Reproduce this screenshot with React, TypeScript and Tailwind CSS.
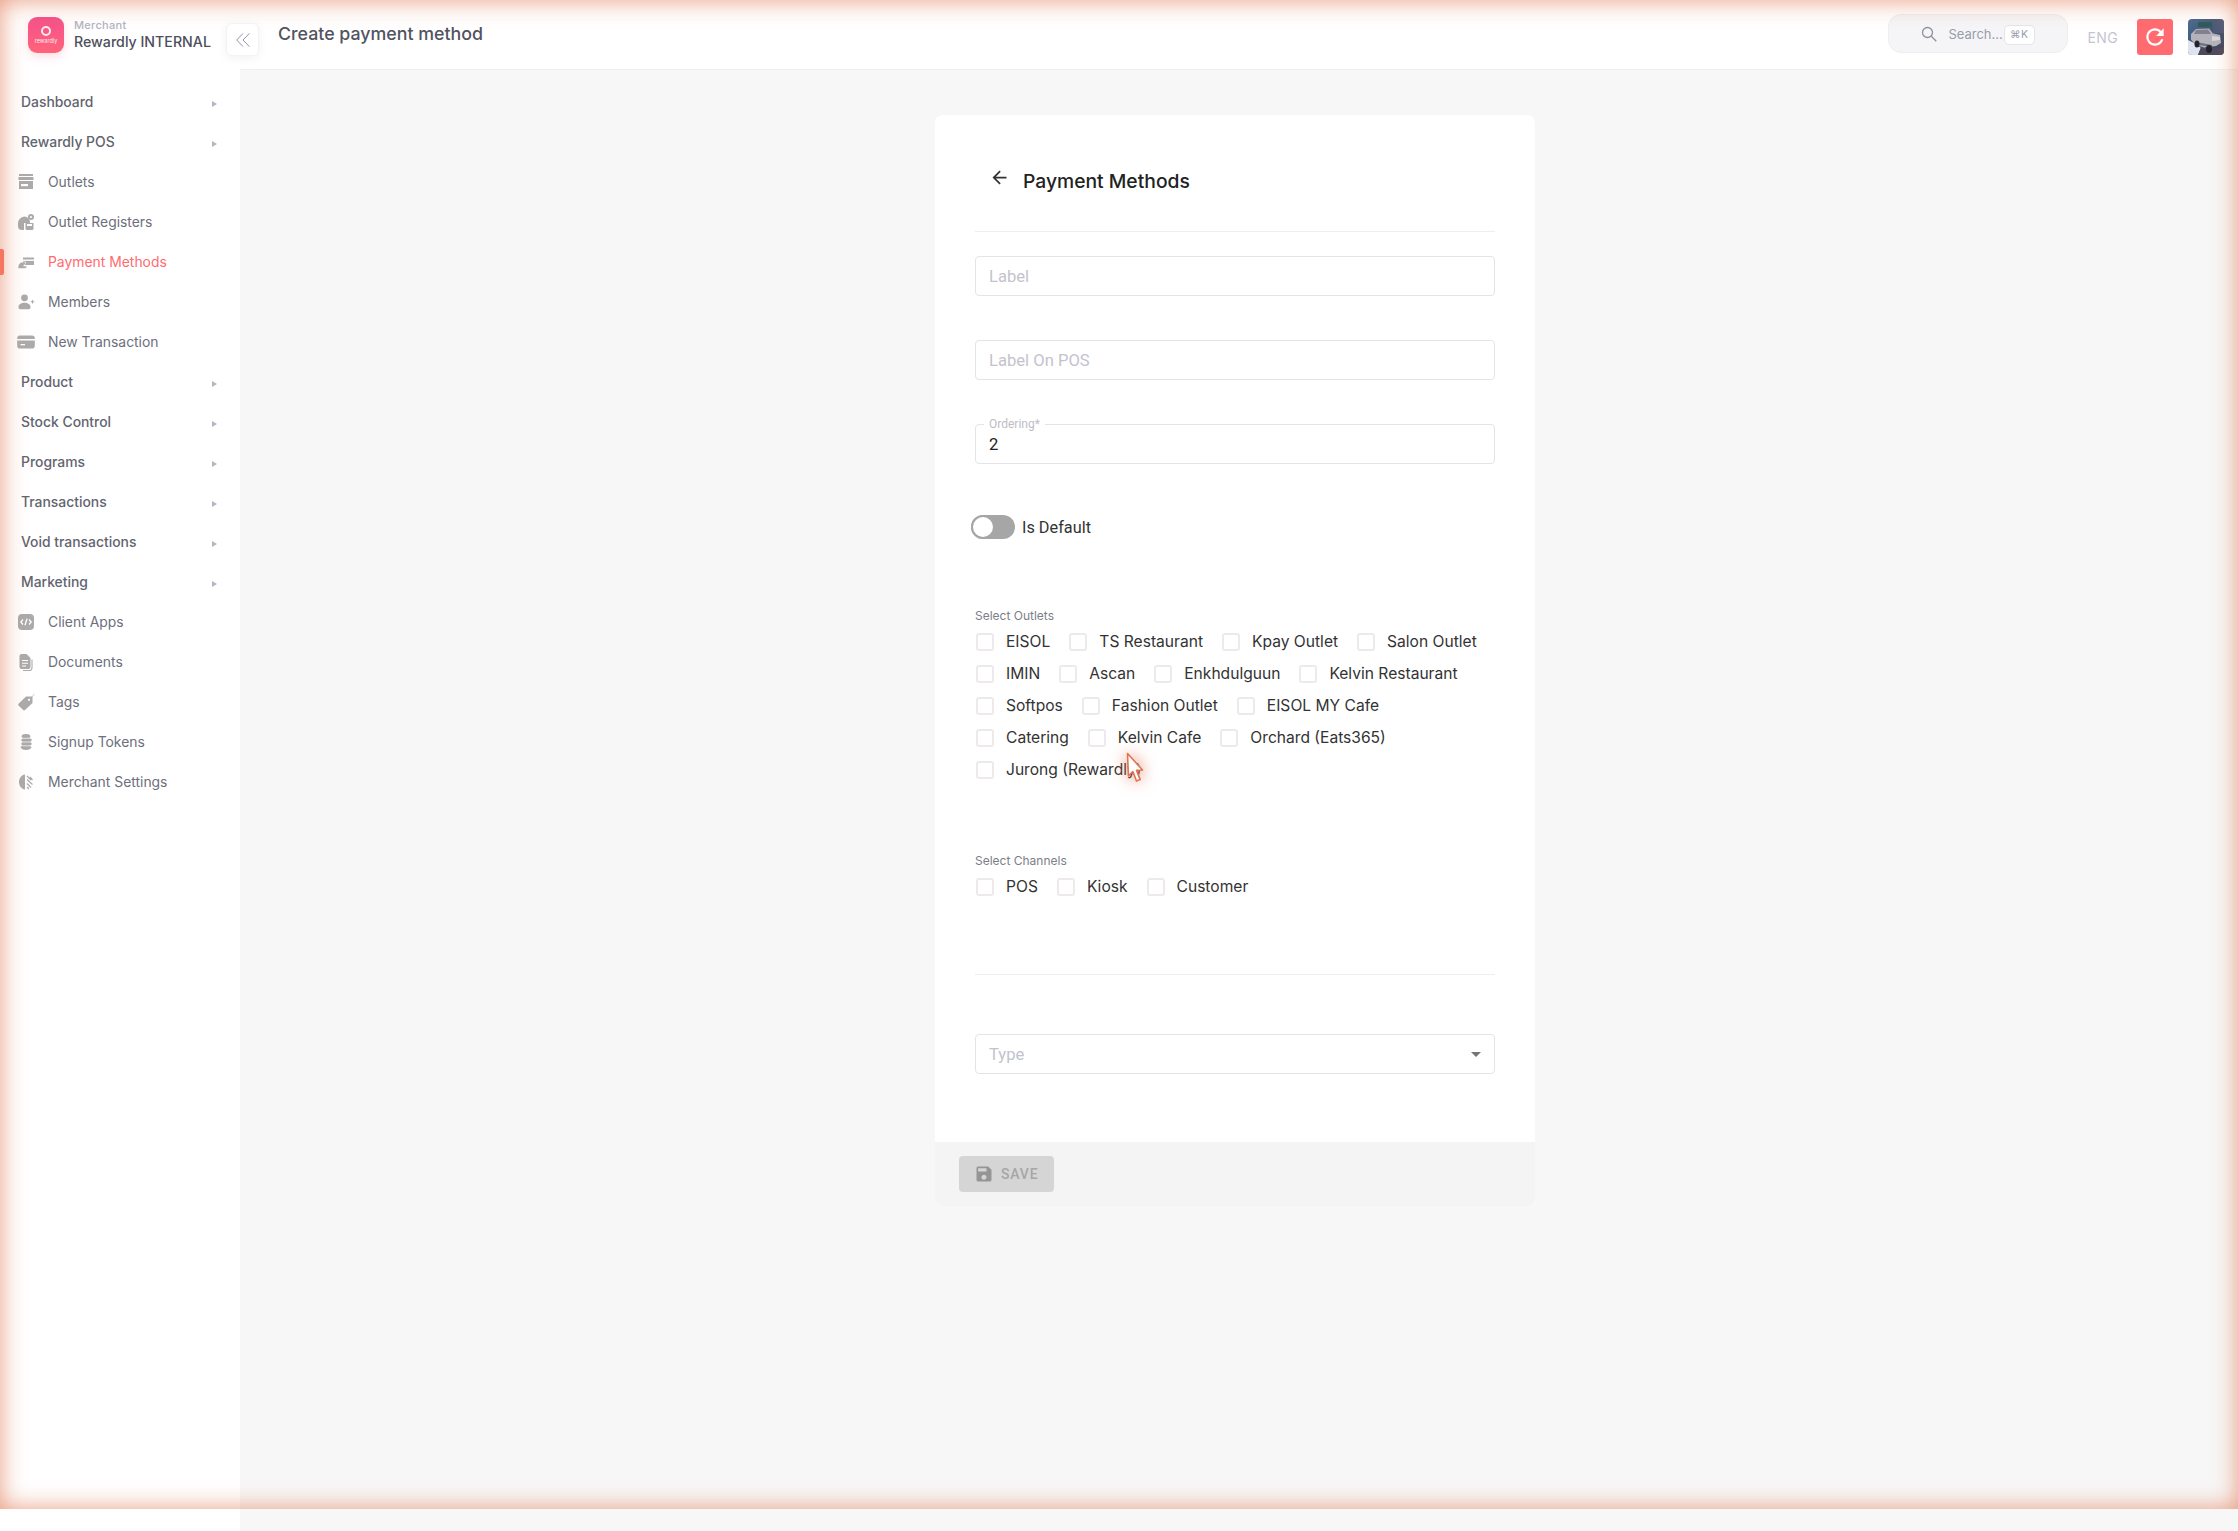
import React from "react";

const I = ({ children }: { children: React.ReactNode }) => (
  <svg viewBox="0 0 18 18" className="w-[18px] h-[18px] text-[#ababab]" fill="currentColor">{children}</svg>
);

const icons: Record<string, React.ReactNode> = {
  outlets: (
    <I>
      <path d="M2 1h14v2H2z" />
      <path d="M1.500 4h15v3h-15z" />
      <path d="M2 8h14v8H2z" />
      <path d="M4 11h7v2.200H4z" fill="#fff" />
    </I>
  ),
  registers: (
    <I>
      <path d="M8 3.500a7 7 0 0 0-7 7v2.500a4 4 0 0 0 4 4h2v-7h6a6 6 0 0 0-5-6.500z" />
      <path d="M8.500 10h8v5.500a1.500 1.500 0 0 1-1.500 1.500h-5a1.500 1.500 0 0 1-1.500-1.500z" />
      <path d="M10 11h5v2h-5z" fill="#fff" />
      <circle cx="14" cy="4" r="3" />
      <circle cx="14" cy="4" r="1" fill="#fff" />
    </I>
  ),
  payment: (
    <I>
      <path d="M6 4.500h11v7.500H6z" />
      <path d="M6 6.500h11v1.400H6z" fill="#fff" />
      <path d="M1 14.500c0-2.500 1.500-5 4-5.500h3.500v1.500l-2 2.500H10l-1 2.500H1.500z" stroke="#fff" strokeWidth=".6" />
    </I>
  ),
  members: (
    <I>
      <circle cx="7.500" cy="4.800" r="3.400" />
      <path d="M1.500 14c0-2.500 2.500-4.200 6-4.200s6 1.700 6 4.200v.6a1.600 1.600 0 0 1-1.600 1.600h-8.800a1.600 1.600 0 0 1-1.600-1.600z" />
      <path d="M15 7h1v1.300h1.300v1H16v1.300h-1V9.300h-1.300v-1H15z" />
    </I>
  ),
  card: (
    <I>
      <path d="M3 2.500h12a2.800 2.800 0 0 1 2.800 2.800V6H.2v-.7A2.800 2.800 0 0 1 3 2.500z" />
      <path d="M.2 7.400h17.600v5.300a2.800 2.800 0 0 1-2.800 2.800H3a2.800 2.800 0 0 1-2.800-2.800z" />
      <path d="M3.500 11h4.500v1.300H3.500z" fill="#fff" />
    </I>
  ),
  apps: (
    <I>
      <rect x="1" y="1" width="16" height="16" rx="4" />
      <path d="M6 6.500 3.800 9 6 11.500M12 6.500 14.200 9 12 11.500M10 5.800 8 12.200" stroke="#fff" strokeWidth="1.300" fill="none" />
    </I>
  ),
  docs: (
    <I>
      <path d="M2.500 3a2 2 0 0 1 2-2h5l4 4v9a2 2 0 0 1-2 2h-7a2 2 0 0 1-2-2z" />
      <path d="M5 7h6v1.100H5zM5 9.700h6v1.100H5zM5 12.400h4v1.100H5z" fill="#fff" />
      <path d="M15 6.500v8.500a2.500 2.500 0 0 1-2.500 2.500H6" fill="none" stroke="currentColor" strokeWidth="1.100" />
    </I>
  ),
  tags: (
    <I>
      <path d="M9 3.500h6.500v6.500L8 17a1.300 1.300 0 0 1-1.800 0L1.500 12.500a1.300 1.300 0 0 1 0-1.800z" />
      <circle cx="12" cy="6.800" r="1.100" fill="#fff" />
      <path d="M14 5 17.500 1" stroke="currentColor" strokeWidth=".6" />
    </I>
  ),
  tokens: (
    <I>
      <ellipse cx="9" cy="3.300" rx="4.300" ry="2.300" />
      <ellipse cx="9.500" cy="7" rx="5.200" ry="2.500" />
      <ellipse cx="9.500" cy="10.800" rx="5.200" ry="2.500" />
      <ellipse cx="9" cy="14.200" rx="5.200" ry="2.800" />
      <path d="M4.500 5.300h9M4.500 9h10M4.500 12.800h10" stroke="#fff" strokeWidth=".7" />
    </I>
  ),
  settings: (
    <I>
      <path d="M8 1.500v15C4.500 16 2 13 2 9s2.500-7 6-7.500z" />
      <path d="M10 3l4 4M10 6.500l5.500 5M10 10.500l4 4M13 4l2.500 3M10 14l2 2" stroke="currentColor" strokeWidth="1.200" fill="none" />
    </I>
  ),
};

type NavItem = { label: string; icon?: string; active?: boolean };

const nav: NavItem[] = [
  { label: "Dashboard" },
  { label: "Rewardly POS" },
  { label: "Outlets", icon: "outlets" },
  { label: "Outlet Registers", icon: "registers" },
  { label: "Payment Methods", icon: "payment", active: true },
  { label: "Members", icon: "members" },
  { label: "New Transaction", icon: "card" },
  { label: "Product" },
  { label: "Stock Control" },
  { label: "Programs" },
  { label: "Transactions" },
  { label: "Void transactions" },
  { label: "Marketing" },
  { label: "Client Apps", icon: "apps" },
  { label: "Documents", icon: "docs" },
  { label: "Tags", icon: "tags" },
  { label: "Signup Tokens", icon: "tokens" },
  { label: "Merchant Settings", icon: "settings" },
];

const outlets = [
  "EISOL",
  "TS Restaurant",
  "Kpay Outlet",
  "Salon Outlet",
  "IMIN",
  "Ascan",
  "Enkhdulguun",
  "Kelvin Restaurant",
  "Softpos",
  "Fashion Outlet",
  "EISOL MY Cafe",
  "Catering",
  "Kelvin Cafe",
  "Orchard (Eats365)",
  "Jurong (Rewardly)",
];

const channels = ["POS", "Kiosk", "Customer"];

function NavRow({ item }: { item: NavItem }) {
  if (!item.icon) {
    return (
      <div className="flex items-center justify-between h-10 pl-[21px] pr-[23px] text-[13.900px] font-medium text-[#62646f]">
        <span>{item.label}</span>
        <svg viewBox="0 0 5 6" className="w-[5px] h-[6px] mt-[4px]" fill="#b3b5c5">
          <path d="M0 0l5 3-5 3z" />
        </svg>
      </div>
    );
  }
  return (
    <div className={`relative flex items-center h-10 pl-[17px] text-[13.900px] ${item.active ? "text-[#ff6b6f]" : "text-[#6d6f7c]"}`}>
      {item.active && <div className="absolute left-0 top-[7px] w-[4px] h-[26px] rounded-r-[2px] bg-[#ff6b5f]" />}
      {icons[item.icon]}
      <span className="ml-[13px]">{item.label}</span>
    </div>
  );
}

function Check({ label }: { label: string }) {
  return (
    <label className="flex items-center h-8 mr-[18px]">
      <span className="ml-px w-[18px] h-[18px] rounded-[3px] border-2 border-[#eeeaec] bg-white" />
      <span className="ml-[12px] text-[15.600px] text-[#333333]">{label}</span>
    </label>
  );
}

function Field({ placeholder, value, legend }: { placeholder?: string; value?: string; legend?: string }) {
  return (
    <div className="relative h-10">
      <input
        readOnly
        placeholder={placeholder}
        value={value ?? ""}
        className="w-full h-10 rounded-[4px] border border-[#e4e4e7] bg-white px-[13px] font-['Roboto',sans-serif] text-[16.600px] text-[#222222] placeholder:text-[#c3c3cd] outline-none"
      />
      {legend && (
        <span className="absolute left-[9px] top-[-8px] px-[5px] bg-white font-['Roboto',sans-serif] text-[12px] leading-[16px] text-[#bdbdc7]">
          {legend}
        </span>
      )}
    </div>
  );
}

export default function App() {
  return (
    <div className="relative w-[2238px] h-[1531px] overflow-hidden flex bg-white font-['Inter',sans-serif]">
      <aside className="relative w-[240px] shrink-0 bg-white">
        <div className="flex items-center h-[70px] pl-[28px]">
          <div className="w-9 h-9 rounded-[9px] bg-gradient-to-b from-[#f4508c] to-[#ff6479] shadow-[0_4px_10px_rgba(244,80,120,0.18)] flex flex-col items-center pt-[9px]">
            <span className="w-[10px] h-[10px] rounded-full border-[2.5px] border-[#ffe9ee]" />
            <span className="text-[5.500px] leading-[7px] mt-[2px] text-[#ffe9ee]">rewardly</span>
          </div>
          <div className="ml-[10px] -mt-[2px]">
            <div className="text-[11px] leading-[14px] font-medium tracking-[0.3px] text-[#b0b3c2]">Merchant</div>
            <div className="text-[14.200px] leading-[17px] mt-px font-medium text-[#4d4f5c]">Rewardly INTERNAL</div>
          </div>
        </div>
        <nav className="mt-[12px]">
          {nav.map((item) => (
            <NavRow key={item.label} item={item} />
          ))}
        </nav>
        <button className="absolute left-[226px] top-[23px] z-10 w-[33px] h-[33px] rounded-[6px] bg-white border border-[#f3f3f5] shadow-[0_2px_8px_rgba(80,80,100,0.08)] flex items-center justify-center">
          <svg viewBox="0 0 14 14" className="w-[14px] h-[14px]" fill="none" stroke="#8f919e" strokeWidth="1">
            <path d="M7 .5.700 7 7 13.500M13.300.5 7 7l6.300 6.500" />
          </svg>
        </button>
      </aside>

      <div className="flex-1 flex flex-col bg-[#f7f7f7]">
        <header className="h-[70px] shrink-0 bg-white border-b border-[#f0f0f0] flex items-start">
          <h1 className="ml-[38px] mt-[22px] text-[17.800px] leading-[24px] font-medium text-[#51535f]">Create payment method</h1>
          <div className="ml-auto mt-[14px] w-[180px] h-[39px] rounded-[13px] bg-[#f5f5f7] border border-[#eeeef0] flex items-center pl-[32px] pt-[2px]">
            <svg viewBox="0 0 16 16" className="w-[16px] h-[16px] -mt-[2px]" fill="none" stroke="#8f91a0" strokeWidth="1.300">
              <circle cx="6.500" cy="6.500" r="5" />
              <path d="m10.300 10.300 5 5" />
            </svg>
            <span className="ml-[11px] text-[13px] text-[#9a9cac]">Search...</span>
            <span className="ml-[1px] w-[31px] h-[20px] rounded-[5px] bg-white border border-[#e4e4ea] text-[10.500px] leading-[18px] text-center tracking-[0.5px] text-[#9a9cac]">⌘K</span>
          </div>
          <span className="ml-[19px] mt-[30px] text-[14px] leading-[16px] tracking-[0.4px] text-[#c4c5d2]">ENG</span>
          <button className="ml-[19px] mt-[19px] w-9 h-9 rounded-[3px] bg-[#ff6b70] flex items-center justify-center">
            <svg viewBox="0 0 24 24" className="w-[26px] h-[26px]" fill="#fff">
              <path d="M17.650 6.350C16.200 4.900 14.210 4 12 4c-4.420 0-7.990 3.580-7.990 8s3.570 8 7.990 8c3.730 0 6.840-2.550 7.730-6h-2.080c-.82 2.330-3.040 4-5.650 4-3.310 0-6-2.690-6-6s2.690-6 6-6c1.660 0 3.140.69 4.220 1.780L13 11h7V4l-2.350 2.350z" />
            </svg>
          </button>
          <svg viewBox="0 0 36 36" className="ml-[15px] mr-[14px] mt-[19px] w-9 h-9 rounded-[4px]">
            <defs>
              <linearGradient id="av" x1="0" y1="0" x2="1" y2="1">
                <stop offset="0" stopColor="#4a6c93" />
                <stop offset="1" stopColor="#3a3f55" />
              </linearGradient>
              <filter id="soft" x="-10%" y="-10%" width="120%" height="120%">
                <feGaussianBlur stdDeviation="0.7" />
              </filter>
            </defs>
            <rect width="36" height="36" fill="url(#av)" />
            <g filter="url(#soft)">
              <rect x="10" y="3" width="14" height="5" fill="#2f5a5c" />
              <rect x="25" y="0" width="11" height="14" fill="#4c5a78" />
              <path d="M0 21l6 3 7 5-3 7H0z" fill="#dfe3f0" />
              <path d="M10 36l3-8 10 3 13-3v8z" fill="#4e4a5c" />
              <path d="M3 15l5-5 13-.5 4 5 7 1.500 1 8-5 3-12 1.500-9-3-4-5z" fill="#b4b3bc" />
              <path d="M8 11l12-.5 3 4.500H6z" fill="#80808f" />
              <path d="M24 17l8 1v3l-8 1z" fill="#d8d8df" />
              <path d="M8 23l16 3v2l-14-2z" fill="#6f6f7c" />
              <ellipse cx="9" cy="25" rx="2.500" ry="3.500" fill="#22232b" />
              <ellipse cx="21" cy="30" rx="3" ry="4" fill="#22232b" />
            </g>
          </svg>
        </header>

        <main className="flex justify-center pr-[8px] pt-[45px]">
          <section className="w-[600px] rounded-[8px] overflow-hidden bg-white">
            <div className="px-[40px] pt-[50px] pb-[68px]">
              <div className="flex items-center h-[32px] pl-[14px]">
                <svg viewBox="0 0 24 24" className="w-[21px] h-[21px] mb-[8px]" fill="#333333">
                  <path d="M20 11H7.830l5.590-5.590L12 4l-8 8 8 8 1.410-1.410L7.830 13H20v-2z" />
                </svg>
                <h2 className="ml-[13px] text-[19.300px] font-medium text-[#222222]">Payment Methods</h2>
              </div>
              <div className="mt-[34px] border-t border-[#eeeeee]" />
              <div className="mt-[24px]"><Field placeholder="Label" /></div>
              <div className="mt-[44px]"><Field placeholder="Label On POS" /></div>
              <div className="mt-[44px]"><Field value="2" legend="Ordering*" /></div>
              <div className="mt-[51px] flex items-center h-6 -ml-[4px]">
                <span className="relative w-[44px] h-6 rounded-full bg-[#a6a6a6]">
                  <span className="absolute left-0 top-0 w-6 h-6 rounded-full bg-white border-2 border-[#a6a6a6]" />
                </span>
                <span className="ml-[7px] mt-[2px] font-['Roboto',sans-serif] text-[16.300px] text-[#333333]">Is Default</span>
              </div>
              <div className="mt-[69px] text-[12px] leading-[16px] text-[#7c7e88]">Select Outlets</div>
              <div className="mt-[2px] flex flex-wrap">
                {outlets.map((o) => (
                  <Check key={o} label={o} />
                ))}
              </div>
              <div className="mt-[67px] text-[12px] leading-[16px] text-[#7c7e88]">Select Channels</div>
              <div className="mt-[2px] flex flex-wrap">
                {channels.map((o) => (
                  <Check key={o} label={o} />
                ))}
              </div>
              <div className="mt-[71px] border-t border-[#eeeeee]" />
              <div className="relative mt-[59px] h-10 rounded-[4px] border border-[#e4e4e7] flex items-center px-[13px] font-['Roboto',sans-serif] text-[16.600px] text-[#c3c3cd]">
                <span className="mt-[2px]">Type</span>
                <svg viewBox="0 0 10 5" className="ml-auto w-[10px] h-[5px]" fill="#757575">
                  <path d="M0 0h10L5 5z" />
                </svg>
              </div>
            </div>
            <footer className="h-[64px] bg-[#f4f4f4] pl-[24px] pt-[14px]">
              <button className="w-[95px] h-9 rounded-[4px] bg-[#d5d5d5] flex items-center pl-[16px] font-['Roboto',sans-serif] text-[14px] font-medium tracking-[0.8px] text-[#a6a6a6]">
                <svg viewBox="0 0 24 24" className="w-[20px] h-[20px] -ml-[1px]" fill="#959595">
                  <path d="M17 3H5c-1.110 0-2 .9-2 2v14c0 1.100.89 2 2 2h14c1.100 0 2-.9 2-2V7l-4-4zm-5 16c-1.660 0-3-1.340-3-3s1.340-3 3-3 3 1.340 3 3-1.340 3-3 3zm3-10H5V5h10v4z" />
                </svg>
                <span className="ml-[7px]">SAVE</span>
              </button>
            </footer>
          </section>
        </main>
      </div>

      <div className="absolute left-0 top-0 w-full h-[1509px] pointer-events-none shadow-[inset_0_0_24px_rgba(228,135,100,0.85)]" />

      <svg viewBox="0 0 18 31" className="absolute left-[1126px] top-[752px] w-[18px] h-[31px] pointer-events-none drop-shadow-[0_0_8px_rgba(232,112,74,0.85)]">
        <path d="M1.500 1.500 16.500 18l-6 .4 3.600 9-3.600 1.600-3.600-9.500-4.500 4.300z" fill="#fff" stroke="#e3734f" strokeWidth="1.600" strokeLinejoin="round" />
      </svg>
    </div>
  );
}
